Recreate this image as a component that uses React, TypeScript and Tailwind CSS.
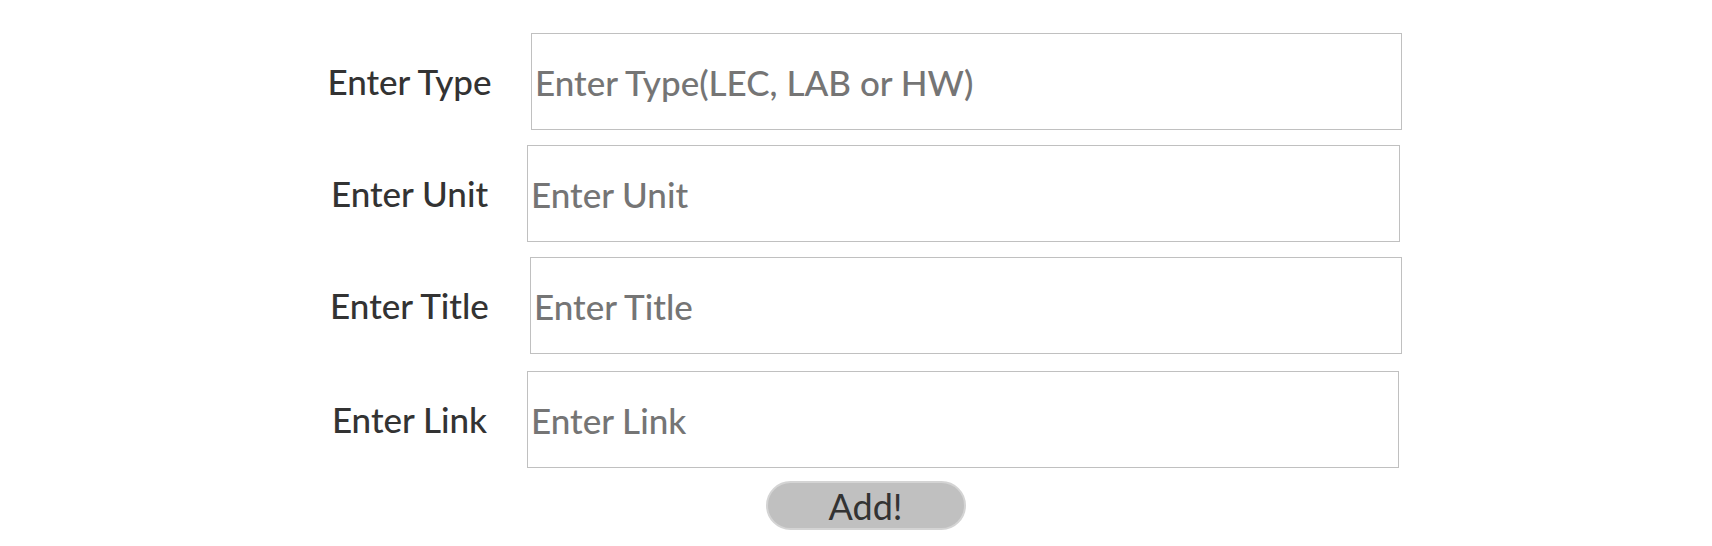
import { useState } from 'react';

const rows = [
    { label: 'Enter Type', placeholder: 'Enter Type(LEC, LAB or HW)', row: 'mt-[33px]', input: 'ml-[12px] w-[871px]' },
    { label: 'Enter Unit', placeholder: 'Enter Unit', row: 'mt-[15px]', input: 'ml-[8px] w-[873px]' },
    { label: 'Enter Title', placeholder: 'Enter Title', row: 'mt-[15px]', input: 'ml-[11px] w-[872px]' },
    { label: 'Enter Link', placeholder: 'Enter Link', row: 'mt-[17px]', input: 'ml-[8px] w-[872px]' },
];

export default function App() {
    const [values, setValues] = useState<string[]>(['', '', '', '']);

    return (
        <div className="w-full min-h-[546px] bg-white font-['Lato',sans-serif]">
            <form
                className="ml-[300px] w-[1131px] flex flex-col"
                onSubmit={e => e.preventDefault()}
            >
                {rows.map((r, i) => (
                    <div key={r.label} className={`flex items-center ${r.row}`}>
                        <label className="w-[219px] text-center text-[35px] font-medium text-[#333333]">{r.label}</label>
                        <input
                            className={`${r.input} h-[97px] border border-[#c0c0c0] bg-white px-[3px] text-[35px] font-medium text-[#333] placeholder:text-[#757575] outline-none`}
                            placeholder={r.placeholder}
                            value={values[i]}
                            onChange={e => {
                                const next = [...values];
                                next[i] = e.target.value;
                                setValues(next);
                            }}
                        />
                    </div>
                ))}
                <button
                    type="submit"
                    className="mt-[13px] mx-auto w-[200px] h-[49px] rounded-full border-2 border-[#d4d4d4] bg-[#c0c0c0] text-[36px] leading-none text-[#333]"
                >
                    Add!
                </button>
            </form>
        </div>
    );
}
